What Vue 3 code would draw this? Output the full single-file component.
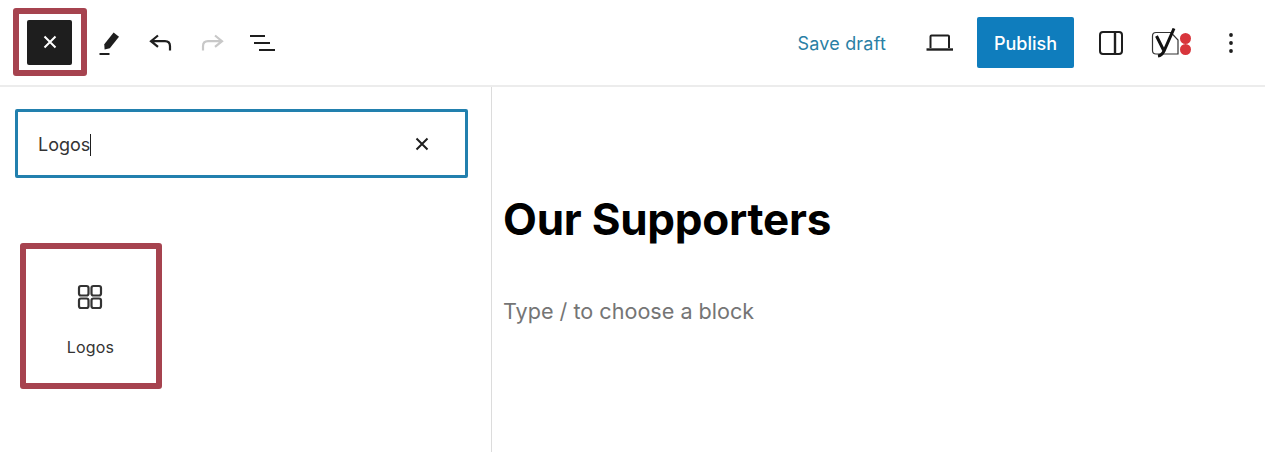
<template>
  <div class="editor">
    <header class="toolbar">
      <div class="toolbar-left">
        <div class="mark mark-toggle">
          <button class="toggle">
            <svg width="24" height="24" viewBox="0 0 24 24"><path d="M6.500 6.500l11 11M17.500 6.500l-11 11" stroke="#fff" stroke-width="2" fill="none" /></svg>
          </button>
        </div>
        <div class="tools">
          <svg class="tool" width="30" height="30" viewBox="0 0 30 30"><path d="M18.600 4.500l5.400 4.200-9.200 11.600-5.200 1.300-0.300-5.300z" fill="#1e1e1e" /><path d="M4.500 26h10" stroke="#1e1e1e" stroke-width="2" /></svg>
          <svg class="tool" width="30" height="30" viewBox="0 0 30 30"><path d="M12 7.500L5 13.200l7 5.700M5.500 13.200h13.500c3.400 0 5 2.300 5 5v4.300" stroke="#1e1e1e" stroke-width="2.200" fill="none" /></svg>
          <svg class="tool" width="30" height="30" viewBox="0 0 30 30"><path d="M18 7.500l7 5.700-7 5.700M24.500 13.200H11c-3.400 0-5 2.300-5 5v4.300" stroke="#c8c8c8" stroke-width="2.200" fill="none" /></svg>
          <svg class="tool" width="30" height="30" viewBox="0 0 30 30"><path d="M2 8h15M6 15h16M11 22h16" stroke="#1e1e1e" stroke-width="2.200" fill="none" /></svg>
        </div>
      </div>
      <div class="toolbar-right">
        <span class="save">Save draft</span>
        <svg class="laptop" width="30" height="30" viewBox="0 0 30 30"><path d="M5.500 20V8.500a1 1 0 0 1 1-1h16.500a1 1 0 0 1 1 1V20" stroke="#1e1e1e" stroke-width="2" fill="none" /><path d="M1.500 21.500h26.500" stroke="#1e1e1e" stroke-width="2.400" /></svg>
        <button class="publish">Publish</button>
        <svg class="panel" width="24" height="24" viewBox="0 0 24 24"><rect x="1" y="1" width="22" height="22" rx="3" stroke="#1e1e1e" stroke-width="2" fill="none" /><path d="M16 1v22" stroke="#1e1e1e" stroke-width="2.400" /></svg>
        <svg class="yoast" width="40" height="30" viewBox="-1 0 40 30"><path d="M4 4.500h15l7 7.500v14H4a3.500 3.500 0 0 1-3.500-3.500V8A3.500 3.500 0 0 1 4 4.500z" stroke="#333" stroke-width="1.200" fill="#fff" /><path d="M4.500 8l7 14M22 0.500L12 23c-1.500 3-3 4.500-6 5" stroke="#111" stroke-width="3" fill="none" /><circle cx="33.500" cy="10.500" r="5.500" fill="#d8353c" /><circle cx="33.500" cy="21.500" r="5.500" fill="#d8353c" /></svg>
        <svg class="more" width="6" height="24" viewBox="0 0 6 24"><circle cx="3" cy="4" r="1.900" fill="#1e1e1e" /><circle cx="3" cy="12" r="1.900" fill="#1e1e1e" /><circle cx="3" cy="20" r="1.900" fill="#1e1e1e" /></svg>
      </div>
    </header>
    <div class="body">
      <aside class="sidebar">
        <div class="search">
          <span class="search-text">Logos</span>
          <svg width="24" height="24" viewBox="0 0 24 24"><path d="M6.500 6.500l11 11M17.500 6.500l-11 11" stroke="#1e1e1e" stroke-width="2" fill="none" /></svg>
        </div>
        <div class="mark mark-block">
          <svg class="block-icon" width="30" height="30" viewBox="0 0 30 30"><g stroke="#333" stroke-width="2.200" fill="none"><rect x="4" y="4" width="9.500" height="9.500" rx="2" /><rect x="16.500" y="4" width="9.500" height="9.500" rx="2" /><rect x="4" y="16.500" width="9.500" height="9.500" rx="2" /><rect x="16.500" y="16.500" width="9.500" height="9.500" rx="2" /></g></svg>
          <span class="block-label">Logos</span>
        </div>
      </aside>
      <main class="canvas">
        <h1 class="title">Our Supporters</h1>
        <p class="placeholder">Type / to choose a block</p>
      </main>
    </div>
  </div>
</template>

<script setup>
</script>

<style>
html, body {
  margin: 0;
  background: #fff;
}
</style>

<style scoped>
.editor {
  width: 1265px;
  height: 452px;
  overflow: hidden;
  background: #fff;
  color: #1e1e1e;
  font-family: Inter, "Liberation Sans", sans-serif;
}

.toolbar {
  height: 85px;
  border-bottom: 2px solid #ececec;
  display: flex;
  justify-content: space-between;
  align-items: center;
}

.toolbar-left {
  display: flex;
  align-items: center;
  padding-left: 13px;
}

.mark {
  box-sizing: border-box;
  border: 6px solid #a6434f;
  border-radius: 3px;
}

.mark-toggle {
  width: 74px;
  height: 68px;
  margin-top: -1px;
  padding-right: 1px;
  display: flex;
  align-items: center;
  justify-content: center;
}

.toggle {
  width: 45px;
  height: 45px;
  border: 0;
  padding: 0;
  border-radius: 2px;
  background: #1e1e1e;
  display: flex;
  align-items: center;
  justify-content: center;
}

.tools {
  display: flex;
  gap: 21px;
  margin-left: 8px;
}

.toolbar-right {
  display: flex;
  align-items: center;
  padding-right: 31px;
}

.save {
  font-size: 18px;
  letter-spacing: 0.2px;
  color: #2a7fa5;
  margin-top: 2px;
}

.laptop {
  margin-left: 39px;
}

.publish {
  width: 97px;
  height: 51px;
  margin-left: 22px;
  padding: 2px 0 0;
  border: 0;
  border-radius: 2px;
  background: #0f7dbd;
  color: #fff;
  font: 500 18px Inter, "Liberation Sans", sans-serif;
}

.panel {
  margin-left: 25px;
}

.yoast {
  margin-left: 28px;
}

.more {
  margin-left: 37px;
}

.body {
  display: flex;
  height: 365px;
}

.sidebar {
  width: 492px;
  box-sizing: border-box;
  border-right: 1px solid #dcdcdc;
  padding: 22px 0 0 15px;
}

.search {
  box-sizing: border-box;
  width: 453px;
  height: 69px;
  border: 3px solid #2280ae;
  border-radius: 2px;
  display: flex;
  align-items: center;
  justify-content: space-between;
  padding: 0 31px 0 20px;
}

.search-text {
  font-size: 18px;
  color: #333;
  border-right: 1px solid #1e1e1e;
  line-height: 22px;
  margin-top: 2px;
}

.mark-block {
  width: 142px;
  height: 146px;
  margin: 65px 0 0 5px;
  display: flex;
  flex-direction: column;
  align-items: center;
  padding-top: 33px;
}

.block-icon {
  margin-right: 2px;
}

.block-label {
  margin-top: 25px;
  margin-right: 1px;
  font-size: 16px;
  letter-spacing: 0.2px;
  color: #333;
}

.canvas {
  padding-left: 11px;
}

.title {
  margin: 102px 0 0;
  font-size: 44px;
  line-height: 60px;
  font-weight: 700;
  color: #000;
  letter-spacing: -0.25px;
}

.placeholder {
  margin: 47px 0 0;
  font-size: 21.6px;
  line-height: 30px;
  color: #757575;
}
</style>
